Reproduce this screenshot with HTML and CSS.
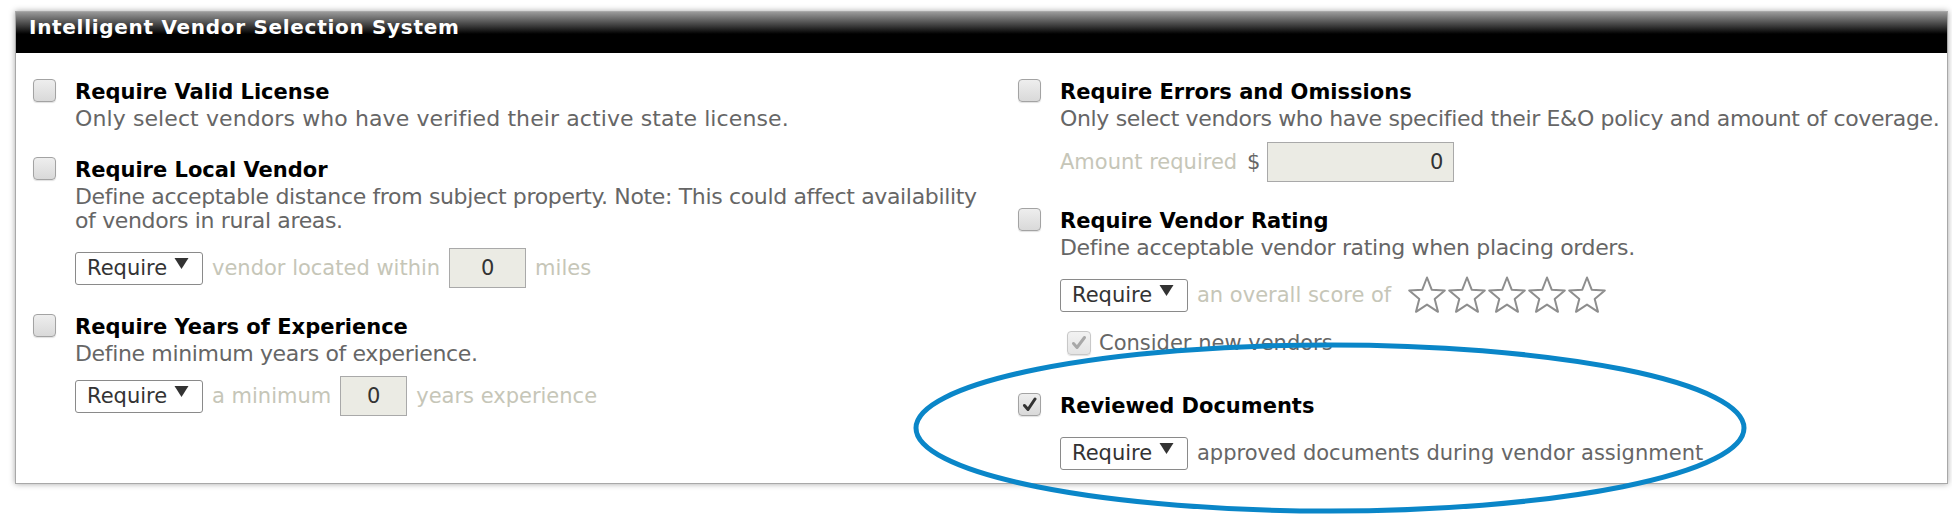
FILE: index.html
```html
<!DOCTYPE html>
<html>
<head>
<meta charset="utf-8">
<link rel="stylesheet" href="styles.css">
</head>
<body>
<div class="panel">
  <div class="panel-head">Intelligent Vendor Selection System</div>
  <div class="panel-body">
    <div class="col col-left">
      <div class="opt">
        <span class="cb"></span>
        <div class="opt-body">
          <div class="opt-title">Require Valid License</div>
          <div class="opt-desc opt-desc-wide">Only select vendors who have verified their active state license.</div>
        </div>
      </div>
      <div class="opt">
        <span class="cb"></span>
        <div class="opt-body">
          <div class="opt-title">Require Local Vendor</div>
          <div class="opt-desc">Define acceptable distance from subject property. Note: This could affect availability of vendors in rural areas.</div>
          <div class="controls">
            <div class="select"><span>Require</span><svg class="arrow" width="15" height="11" viewBox="0 0 15 11"><polygon points="0.5,0 14.5,0 7.5,11" fill="#333"/></svg></div>
            <span class="muted">vendor located within</span>
            <div class="num">0</div>
            <span class="muted">miles</span>
          </div>
        </div>
      </div>
      <div class="opt">
        <span class="cb"></span>
        <div class="opt-body">
          <div class="opt-title">Require Years of Experience</div>
          <div class="opt-desc">Define minimum years of experience.</div>
          <div class="controls controls-tight">
            <div class="select"><span>Require</span><svg class="arrow" width="15" height="11" viewBox="0 0 15 11"><polygon points="0.5,0 14.5,0 7.5,11" fill="#333"/></svg></div>
            <span class="muted">a minimum</span>
            <div class="num num-short">0</div>
            <span class="muted">years experience</span>
          </div>
        </div>
      </div>
    </div>
    <div class="col col-right">
      <div class="opt">
        <span class="cb"></span>
        <div class="opt-body">
          <div class="opt-title">Require Errors and Omissions</div>
          <div class="opt-desc nowrap">Only select vendors who have specified their E&amp;O policy and amount of coverage.</div>
          <div class="controls controls-amount">
            <span class="muted">Amount required <span class="dollar">$</span></span>
            <div class="num num-amount">0</div>
          </div>
        </div>
      </div>
      <div class="opt">
        <span class="cb"></span>
        <div class="opt-body">
          <div class="opt-title">Require Vendor Rating</div>
          <div class="opt-desc">Define acceptable vendor rating when placing orders.</div>
          <div class="controls">
            <div class="select"><span>Require</span><svg class="arrow" width="15" height="11" viewBox="0 0 15 11"><polygon points="0.5,0 14.5,0 7.5,11" fill="#333"/></svg></div>
            <span class="muted">an overall score of</span>
            <div class="stars">
              <svg class="star" width="40" height="38" viewBox="0 0 40 38"><polygon points="20,1.5 24.7,13.7 37.8,14.4 27.7,22.9 31,35.8 20,28.6 9,35.8 12.3,22.9 2.2,14.4 15.3,13.7" /></svg>
              <svg class="star" width="40" height="38" viewBox="0 0 40 38"><polygon points="20,1.5 24.7,13.7 37.8,14.4 27.7,22.9 31,35.8 20,28.6 9,35.8 12.3,22.9 2.2,14.4 15.3,13.7" /></svg>
              <svg class="star" width="40" height="38" viewBox="0 0 40 38"><polygon points="20,1.5 24.7,13.7 37.8,14.4 27.7,22.9 31,35.8 20,28.6 9,35.8 12.3,22.9 2.2,14.4 15.3,13.7" /></svg>
              <svg class="star" width="40" height="38" viewBox="0 0 40 38"><polygon points="20,1.5 24.7,13.7 37.8,14.4 27.7,22.9 31,35.8 20,28.6 9,35.8 12.3,22.9 2.2,14.4 15.3,13.7" /></svg>
              <svg class="star" width="40" height="38" viewBox="0 0 40 38"><polygon points="20,1.5 24.7,13.7 37.8,14.4 27.7,22.9 31,35.8 20,28.6 9,35.8 12.3,22.9 2.2,14.4 15.3,13.7" /></svg>
            </div>
          </div>
          <div class="consider">
            <span class="cb cb-small cb-disabled"><svg width="16" height="16" viewBox="0 0 16 16"><path d="M2.5 8.5 L6 12.5 L13.5 2.5" fill="none" stroke="#a8a8a8" stroke-width="3" stroke-linecap="round" stroke-linejoin="round"/></svg></span>
            <span class="consider-text">Consider new vendors</span>
          </div>
        </div>
      </div>
      <div class="opt">
        <span class="cb cb-checked"><svg width="16" height="16" viewBox="0 0 16 16"><path d="M2.5 8.5 L6 12.5 L13 2" fill="none" stroke="#333" stroke-width="3" stroke-linecap="round" stroke-linejoin="round"/></svg></span>
        <div class="opt-body">
          <div class="opt-title opt-title-solo">Reviewed Documents</div>
          <div class="controls controls-last">
            <div class="select"><span>Require</span><svg class="arrow" width="15" height="11" viewBox="0 0 15 11"><polygon points="0.5,0 14.5,0 7.5,11" fill="#333"/></svg></div>
            <span class="plain">approved documents during vendor assignment</span>
          </div>
        </div>
      </div>
    </div>
  </div>
</div>
<svg class="highlight" width="1952" height="525" viewBox="0 0 1952 525">
  <ellipse cx="1330" cy="428" rx="414" ry="83" fill="none" stroke="#0a86c8" stroke-width="5"/>
</svg>
</body>
</html>
```

FILE: styles.css
```css
html, body {
  margin: 0;
  padding: 0;
  background: #ffffff;
}

body {
  font-family: "DejaVu Sans", Verdana, sans-serif;
  width: 1952px;
  height: 525px;
  overflow: hidden;
  position: relative;
}

.panel {
  margin: 11px 4px 0 15px;
  border: 1px solid #a8a8a8;
  background: #fff;
  box-shadow: 0 0 6px rgba(0, 0, 0, 0.35);
}

.panel-head {
  height: 41px;
  box-sizing: border-box;
  padding: 3px 0 0 13px;
  background: linear-gradient(#9a9a9a 0px, #3a3a3a 14px, #000 22px, #000 100%);
  color: #fff;
  font-weight: bold;
  font-size: 20px;
  letter-spacing: 0.7px;
  line-height: 24px;
}

.panel-body {
  display: grid;
  grid-template-columns: 985px 1fr;
  padding: 27px 0 10px 17px;
}

.col {
  display: flex;
  flex-direction: column;
  gap: 27px;
}

.col-left {
  padding-right: 28px;
}

.opt {
  display: flex;
  align-items: flex-start;
}

.cb {
  flex: none;
  width: 23px;
  height: 23px;
  box-sizing: border-box;
  margin: -1px 19px 0 0;
  border: 1px solid #a3a3a3;
  border-radius: 4px;
  background: linear-gradient(#eeeeee, #d9d9d9);
  box-shadow: 0 1px 1px rgba(0, 0, 0, 0.12);
  display: flex;
  align-items: center;
  justify-content: center;
}

.cb-small {
  width: 24px;
  height: 24px;
  margin: 0 8px 0 0;
}

.cb-disabled {
  border-color: #c8c8c8;
  background: linear-gradient(#f2f2f2, #e4e4e4);
}

.opt-body {
  flex: 1;
  min-width: 0;
}

.opt-title {
  font-weight: bold;
  font-size: 21px;
  line-height: 24px;
  margin-bottom: 3px;
  color: #000;
}

.opt-title-solo {
  margin-bottom: 0;
}

.opt-desc {
  font-size: 22px;
  line-height: 24px;
  letter-spacing: -0.35px;
  color: #666;
}

.opt-desc-wide {
  letter-spacing: 0.1px;
}

.nowrap {
  white-space: nowrap;
}

.controls {
  display: flex;
  align-items: center;
  gap: 9px;
  height: 40px;
  margin-top: 15px;
  font-size: 21px;
}

.controls-tight {
  margin-top: 10px;
}

.controls-amount {
  margin-top: 11px;
}

.controls-last {
  margin-top: 15px;
}

.select {
  width: 128px;
  height: 33px;
  box-sizing: border-box;
  border: 1px solid #8a8a8a;
  border-radius: 3px;
  background: #fff;
  display: flex;
  align-items: center;
  justify-content: space-between;
  padding: 0 13px 0 11px;
  font-size: 21px;
  color: #333;
}

.arrow {
  align-self: flex-start;
  margin-top: 5px;
}

.muted {
  color: #c6c6b8;
}

.dollar {
  color: #666;
  margin-left: 3px;
}

.plain {
  color: #666;
}

.num {
  width: 77px;
  height: 40px;
  box-sizing: border-box;
  border: 1px solid #a9a9a9;
  background: #ebebe4;
  display: flex;
  align-items: center;
  justify-content: center;
  font-size: 21px;
  color: #333;
}

.num-short {
  width: 67px;
}

.num-amount {
  width: 187px;
  justify-content: flex-end;
  padding-right: 10px;
  margin-left: -2px;
}

.stars {
  display: flex;
  margin-left: 7px;
}

.star polygon {
  fill: #fff;
  stroke: #8e8e8e;
  stroke-width: 2;
  stroke-linejoin: round;
}

.consider {
  display: flex;
  align-items: center;
  margin: 16px 0 12px 7px;
  font-size: 21px;
  line-height: 24px;
  color: #666;
}

.highlight {
  position: absolute;
  left: 0;
  top: 0;
  pointer-events: none;
}
```
